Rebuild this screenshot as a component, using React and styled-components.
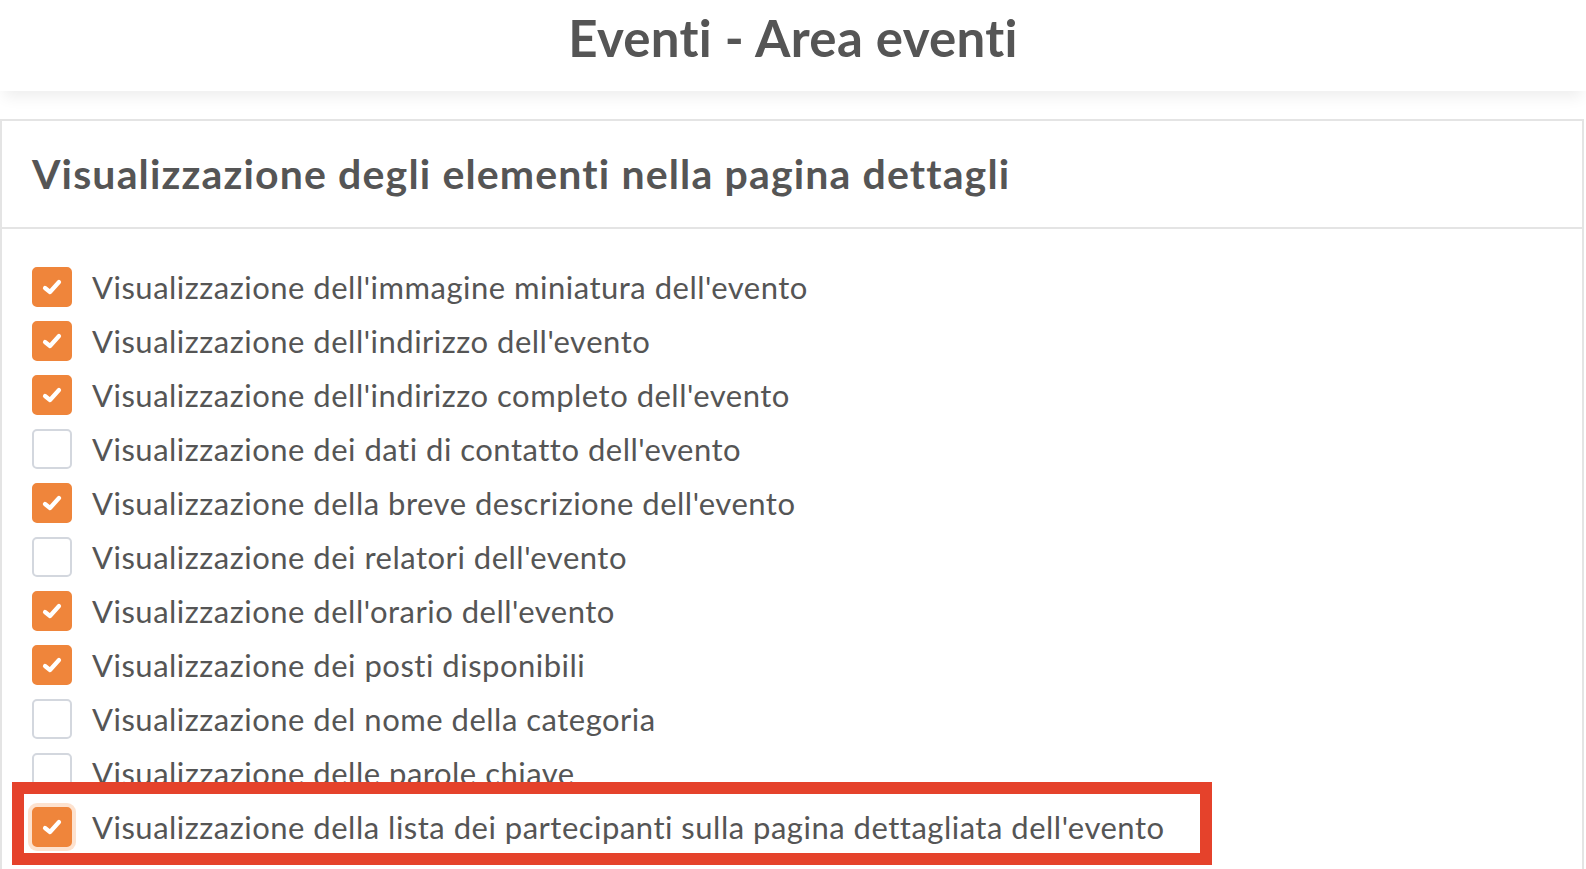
import React from 'react';
import styled, { createGlobalStyle, css } from 'styled-components';

const GlobalStyle = createGlobalStyle`
  html, body {
    margin: 0;
    padding: 0;
    background: #fff;
  }
  body {
    font-family: Lato, "Open Sans", sans-serif;
    color: #555;
    overflow: hidden;
  }
`;

const TopBar = styled.header`
  height: 91px;
  box-sizing: border-box;
  padding-bottom: 16px;
  display: flex;
  align-items: center;
  justify-content: center;
  background: #fff;
  box-shadow: 0 10px 14px -4px rgba(0, 0, 0, 0.07);
  position: relative;
  z-index: 1;
`;

const PageTitle = styled.h1`
  margin: 0;
  font-size: 51px;
  font-weight: 700;
  color: #555;
  letter-spacing: 0.3px;
`;

const Panel = styled.section`
  margin: 28px 2px 0 0;
  border: 2px solid #e4e4e4;
  border-bottom: none;
  height: 760px;
`;

const PanelHead = styled.div`
  height: 108px;
  padding: 0 30px 2px;
  box-sizing: border-box;
  display: flex;
  align-items: center;
  border-bottom: 2px solid #e4e4e4;
`;

const PanelTitle = styled.h2`
  margin: 0;
  font-size: 41px;
  font-weight: 700;
  color: #555;
  letter-spacing: 1.15px;
`;

const OptionList = styled.ul`
  list-style: none;
  margin: 0;
  padding: 31px 0 0;
`;

const OptionRow = styled.li`
  position: relative;
  height: 54px;
  padding-left: 30px;
  display: flex;
  align-items: center;
  gap: 20px;
`;

const Box = styled.span`
  width: 40px;
  height: 40px;
  box-sizing: border-box;
  border-radius: 5px;
  flex-shrink: 0;
  display: flex;
  align-items: center;
  justify-content: center;
  background: #fff;
  border: 2px solid #d3d7de;
  ${(p) => p.checked && css`
    background: #ef853b;
    border-color: #ef853b;
  `}
  ${(p) => p.focused && css`
    box-shadow: 0 0 0 4px #fde2cf;
  `}
`;

const Label = styled.span`
  font-size: 31px;
  color: #555;
  letter-spacing: 0.5px;
  white-space: nowrap;
`;

// annotation frame drawn over the last option
const RedFrame = styled.span`
  position: absolute;
  left: 10px;
  top: -18px;
  width: 1200px;
  height: 83px;
  box-sizing: border-box;
  border: 12px solid #e5422b;
  pointer-events: none;
`;

const OPTIONS = [
  { label: "Visualizzazione dell'immagine miniatura dell'evento", checked: true },
  { label: "Visualizzazione dell'indirizzo dell'evento", checked: true },
  { label: "Visualizzazione dell'indirizzo completo dell'evento", checked: true },
  { label: "Visualizzazione dei dati di contatto dell'evento", checked: false },
  { label: "Visualizzazione della breve descrizione dell'evento", checked: true },
  { label: "Visualizzazione dei relatori dell'evento", checked: false },
  { label: "Visualizzazione dell'orario dell'evento", checked: true },
  { label: 'Visualizzazione dei posti disponibili', checked: true },
  { label: 'Visualizzazione del nome della categoria', checked: false },
  { label: 'Visualizzazione delle parole chiave', checked: false },
  {
    label: "Visualizzazione della lista dei partecipanti sulla pagina dettagliata dell'evento",
    checked: true,
    marked: true,
  },
];

function Check() {
  return (
    <svg width="20" height="16" viewBox="0 0 20 16">
      <polyline
        points="3,9 8,13 17,3"
        fill="none"
        stroke="#fff"
        strokeWidth="4.2"
        strokeLinecap="round"
        strokeLinejoin="round"
      />
    </svg>
  );
}

export default function App() {
  return (
    <>
      <GlobalStyle />
      <TopBar>
        <PageTitle>Eventi - Area eventi</PageTitle>
      </TopBar>
      <Panel>
        <PanelHead>
          <PanelTitle>Visualizzazione degli elementi nella pagina dettagli</PanelTitle>
        </PanelHead>
        <OptionList>
          {OPTIONS.map((o) => (
            <OptionRow key={o.label}>
              <Box checked={o.checked} focused={o.marked}>
                {o.checked && <Check />}
              </Box>
              <Label>{o.label}</Label>
              {o.marked && <RedFrame />}
            </OptionRow>
          ))}
        </OptionList>
      </Panel>
    </>
  );
}
